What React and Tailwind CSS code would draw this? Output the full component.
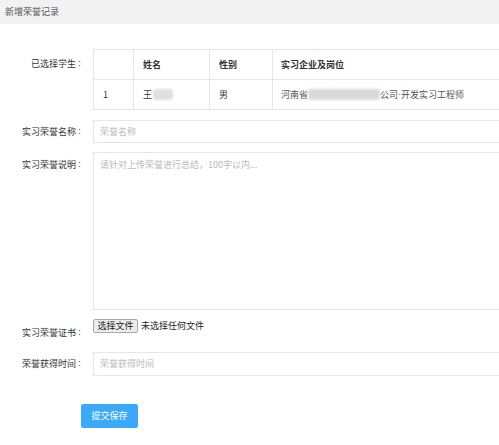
function Label({ children, className = "" }) {
  return (
    <div className={"w-[93px] shrink-0 flex justify-end pr-[10px] " + className}>
      <span>{children}</span>
      <span className="inline-block w-[7px] text-center" style={{ fontFamily: '"Liberation Sans", sans-serif' }}>:</span>
    </div>
  );
}

export default function App() {
  const font = { fontFamily: '"Noto Sans CJK SC", "Noto Sans", sans-serif' };
  return (
    <div className="w-[499px] h-[445px] overflow-hidden bg-white text-[9px] text-[#333]" style={font}>
      <div className="h-[24px] bg-[#f2f2f2] flex items-center pl-[5px] text-[#555] text-[9px]">新增荣誉记录</div>
      <div className="pt-[25px] w-[560px]">
        {/* selected students */}
        <div className="flex">
          <Label className="h-[30px] items-center">已选择学生</Label>
          <div className="flex-1 border border-[#e6e6e6]">
            <div className="flex h-[30px] border-b border-[#e6e6e6] font-bold">
              <div className="w-[40px] border-r border-[#e6e6e6]"></div>
              <div className="w-[76px] border-r border-[#e6e6e6] flex items-center pl-[9px]">姓名</div>
              <div className="w-[63px] border-r border-[#e6e6e6] flex items-center pl-[9px]">性别</div>
              <div className="flex-1 flex items-center pl-[8px]">实习企业及岗位</div>
            </div>
            <div className="flex h-[29px]">
              <div className="w-[40px] border-r border-[#e6e6e6] flex items-center pl-[9px]">1</div>
              <div className="w-[76px] border-r border-[#e6e6e6] flex items-center pl-[9px]">
                王<span className="inline-block w-[20px] h-[11px] rounded-[3px] bg-[#e0e0e0] blur-[1px] ml-[1px]"></span>
              </div>
              <div className="w-[63px] border-r border-[#e6e6e6] flex items-center pl-[9px]">男</div>
              <div className="flex-1 flex items-center pl-[8px] text-[#555]">
                河南省<span className="inline-block w-[72px] h-[11px] rounded-[3px] bg-[#d8d8d8] blur-[1.5px]"></span>公司<span style={{ fontFamily: '"Liberation Sans", sans-serif' }}>·</span>开发实习工程师
              </div>
            </div>
          </div>
        </div>
        {/* honor name */}
        <div className="flex mt-[10px]">
          <Label className="h-[23px] items-center">实习荣誉名称</Label>
          <div className="flex-1 h-[23px] border border-[#e6e6e6] flex items-center pl-[6px] text-[#bbb]">荣誉名称</div>
        </div>
        {/* description */}
        <div className="flex mt-[9px]">
          <Label className="pt-[6px]">实习荣誉说明</Label>
          <div className="flex-1 h-[158px] border border-[#e6e6e6] pt-[5px] pl-[6px] text-[#bbb]">请针对上传荣誉进行总结，100字以内...</div>
        </div>
        {/* certificate */}
        <div className="flex mt-[9px]">
          <Label className="pt-[7px]">实习荣誉证书</Label>
          <div className="flex items-start">
            <div className="h-[14px] w-[45px] border border-[#aaa] bg-[#ececec] rounded-[2px] flex items-center justify-center text-[#222]">选择文件</div>
            <div className="ml-[3px] h-[14px] flex items-center text-[#222]">未选择任何文件</div>
          </div>
        </div>
        {/* date */}
        <div className="flex mt-[12px]">
          <Label className="h-[24px] items-center">荣誉获得时间</Label>
          <div className="flex-1 h-[24px] border border-[#e6e6e6] flex items-center pl-[6px] text-[#bbb]">荣誉获得时间</div>
        </div>
        {/* submit */}
        <div className="mt-[28px] pl-[81px]">
          <div className="w-[57px] h-[24px] bg-[#3ba9f7] rounded-[2px] flex items-center justify-center text-white">提交保存</div>
        </div>
      </div>
    </div>
  );
}
